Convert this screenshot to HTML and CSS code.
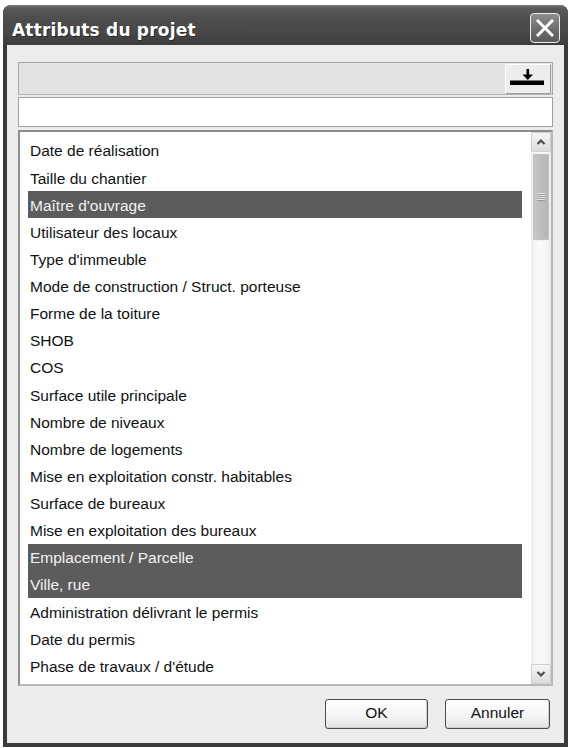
FILE: index.html
```html
<!DOCTYPE html>
<html lang="fr">
<head>
<meta charset="utf-8">
<title>Attributs du projet</title>
<link rel="stylesheet" href="styles.css">
</head>
<body>
<div class="window">
  <div class="titlebar">
    <div class="title">Attributs du projet</div>
    <div class="close">
      <svg width="18" height="18" viewBox="0 0 18 18"><path d="M2 2 L16 16 M16 2 L2 16" stroke="#fff" stroke-width="3" stroke-linecap="square"/></svg>
    </div>
  </div>
  <div class="client">
    <div class="toolbar">
      <div class="tbtn">
        <svg width="44" height="28" viewBox="0 0 44 28">
          <rect x="20.5" y="4" width="2.6" height="7" fill="#000"/>
          <polygon points="16.5,9.5 27,9.5 21.8,15" fill="#000"/>
          <rect x="4" y="15.5" width="34" height="4.5" fill="#000"/>
        </svg>
      </div>
    </div>
    <div class="field"></div>
    <div class="list">
      <div class="items">
        <div class="item">Date de réalisation</div>
        <div class="item">Taille du chantier</div>
        <div class="item sel">Maître d'ouvrage</div>
        <div class="item">Utilisateur des locaux</div>
        <div class="item">Type d'immeuble</div>
        <div class="item">Mode de construction / Struct. porteuse</div>
        <div class="item">Forme de la toiture</div>
        <div class="item">SHOB</div>
        <div class="item">COS</div>
        <div class="item">Surface utile principale</div>
        <div class="item">Nombre de niveaux</div>
        <div class="item">Nombre de logements</div>
        <div class="item">Mise en exploitation constr. habitables</div>
        <div class="item">Surface de bureaux</div>
        <div class="item">Mise en exploitation des bureaux</div>
        <div class="item sel">Emplacement / Parcelle</div>
        <div class="item sel">Ville, rue</div>
        <div class="item">Administration délivrant le permis</div>
        <div class="item">Date du permis</div>
        <div class="item">Phase de travaux / d'étude</div>
      </div>
      <div class="scrollbar">
        <div class="sbtn">
          <svg width="10" height="8" viewBox="0 0 10 8"><polyline points="1.5,6 5,2.5 8.5,6" fill="none" stroke="#4a4a4a" stroke-width="2.2"/></svg>
        </div>
        <div class="track">
          <div class="thumb"><div class="grip"></div></div>
        </div>
        <div class="sbtn">
          <svg width="10" height="8" viewBox="0 0 10 8"><polyline points="1.5,2 5,5.5 8.5,2" fill="none" stroke="#4a4a4a" stroke-width="2.2"/></svg>
        </div>
      </div>
    </div>
    <div class="actions">
      <div class="btn ok">OK</div>
      <div class="btn cancel">Annuler</div>
    </div>
  </div>
</div>
</body>
</html>
```
FILE: styles.css
```css
html, body {
  margin: 0;
  padding: 0;
  background: #ffffff;
}
body {
  width: 573px;
  height: 748px;
  overflow: hidden;
  font-family: "Liberation Sans", Arial, sans-serif;
}
.window {
  margin: 5px 0 0 3px;
  width: 565px;
  height: 742px;
  display: flex;
  flex-direction: column;
  background: #3b3b3b;
  border-radius: 8px 8px 0 0;
  overflow: hidden;
}
.titlebar {
  flex: none;
  height: 40px;
  box-sizing: border-box;
  padding: 0 8px 0 9px;
  display: flex;
  justify-content: space-between;
  align-items: flex-start;
  background: linear-gradient(to bottom, #7c7c7c 0px, #5a5a5a 3px, #4e4e4e 12px, #474747 28px, #3c3c3c 40px);
}
.title {
  margin-top: 15px;
  font-family: "DejaVu Sans", sans-serif;
  font-weight: bold;
  font-size: 17px;
  line-height: 20px;
  letter-spacing: 0.2px;
  color: #ffffff;
  text-shadow: 1px 1px 0 #2c2c2c;
}
.close {
  margin-top: 8px;
  width: 30px;
  height: 30px;
  box-sizing: border-box;
  border: 1.5px solid #eeeeee;
  border-radius: 4px;
  background: linear-gradient(to bottom, #8e8e8e, #6a6a6a 60%, #5c5c5c);
  display: flex;
  align-items: center;
  justify-content: center;
}
.client {
  flex: 1;
  margin: 0 4px 4px 4px;
  background: #ececec;
  padding: 17px 11px 0 11px;
  display: flex;
  flex-direction: column;
}
.toolbar {
  flex: none;
  height: 33px;
  box-sizing: border-box;
  border: 1px solid #a6a6a6;
  border-bottom-color: #b4b4b4;
  background: #e3e3e3;
  padding: 1px 1px 0 0;
  display: flex;
  justify-content: flex-end;
}
.tbtn {
  width: 46px;
  height: 30px;
  box-sizing: border-box;
  background: #ededed;
  border-top: 1px solid #ffffff;
  border-left: 1px solid #ffffff;
  border-right: 1px solid #9c9c9c;
  border-bottom: 1px solid #9c9c9c;
}
.tbtn svg {
  display: block;
}
.field {
  flex: none;
  margin-top: 2px;
  height: 30px;
  box-sizing: border-box;
  border: 1px solid #a0a0a0;
  background: #ffffff;
}
.list {
  flex: none;
  margin-top: 3px;
  height: 556px;
  box-sizing: border-box;
  border: 2px solid #8c8c8c;
  border-right-color: #b8b8b8;
  border-bottom-color: #b8b8b8;
  background: #ffffff;
  display: flex;
}
.items {
  flex: 1;
  padding: 4.7px 9px 0 8px;
  overflow: hidden;
}
.item {
  height: 27.13px;
  box-sizing: border-box;
  padding: 2.7px 0 0 2px;
  line-height: 24.4px;
  font-size: 15.5px;
  color: #111111;
  white-space: nowrap;
}
.item.sel {
  background: #5c5c5c;
  color: #f2f2f2;
}
.scrollbar {
  width: 20px;
  flex: none;
  display: flex;
  flex-direction: column;
  background: linear-gradient(to right, #ececec, #fafafa 35%, #f6f6f6 80%, #e6e6e6);
}
.sbtn {
  flex: none;
  height: 20px;
  box-sizing: border-box;
  border: 1px solid #cfcfcf;
  border-radius: 2px;
  background: linear-gradient(to bottom, #f6f6f6, #dcdcdc);
  display: flex;
  align-items: center;
  justify-content: center;
}
.track {
  flex: 1;
  padding: 1px 1px 0 1px;
}
.thumb {
  height: 88px;
  box-sizing: border-box;
  border: 1px solid #f2f2f2;
  outline: 1px solid #c2c2c2;
  outline-offset: -2px;
  border-radius: 2px;
  background: linear-gradient(to right, #c8c8c8, #bdbdbd 50%, #b6b6b6);
  display: flex;
  align-items: center;
  justify-content: center;
}
.grip {
  width: 8px;
  height: 8px;
  background: repeating-linear-gradient(to bottom, #e8e8e8 0px, #e8e8e8 1px, #9a9a9a 1px, #9a9a9a 2px);
}
.actions {
  flex: none;
  margin-top: 13px;
  height: 30px;
  padding-right: 3px;
  display: flex;
  justify-content: flex-end;
  gap: 17px;
}
.btn {
  height: 30px;
  box-sizing: border-box;
  border: 1px solid #4a4a4a;
  border-radius: 3px;
  background: linear-gradient(to bottom, #ffffff, #f4f4f4 60%, #e2e2e2);
  box-shadow: inset -1px -1px 0 #cfcfcf;
  display: flex;
  align-items: center;
  justify-content: center;
  font-size: 15.5px;
  color: #111111;
  padding-bottom: 2px;
}
.btn.ok {
  width: 103px;
}
.btn.cancel {
  width: 105px;
}
```
